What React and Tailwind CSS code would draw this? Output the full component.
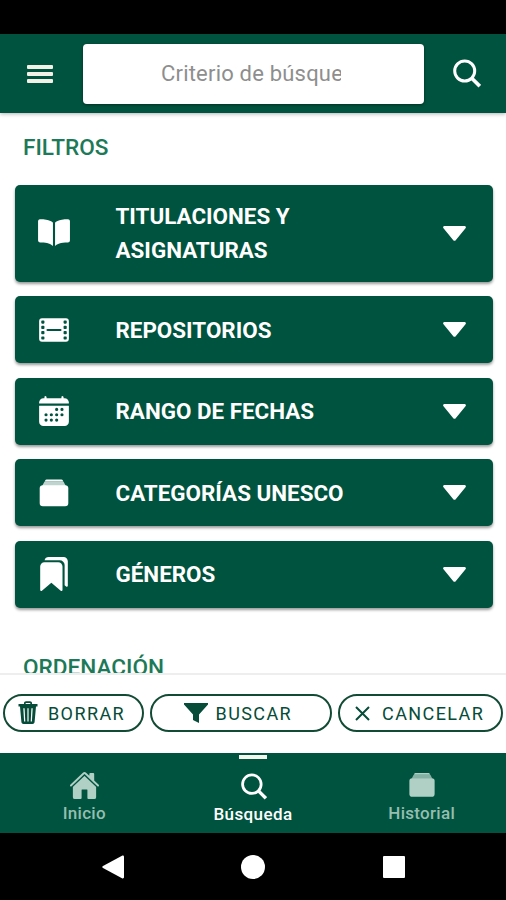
import {
  IoBook,
  IoBookmarks,
  IoCalendar,
  IoFilm,
  IoHome,
} from "react-icons/io5";

const FILTERS = [
  { label: "TITULACIONES Y ASIGNATURAS", icon: IoBook, tall: true },
  { label: "REPOSITORIOS", icon: IoFilm },
  { label: "RANGO DE FECHAS", icon: IoCalendar },
  { label: "CATEGORÍAS UNESCO", icon: StackIcon },
  { label: "GÉNEROS", icon: IoBookmarks },
];

function StackIcon({ className }) {
  return (
    <svg viewBox="0 0 34 34" fill="currentColor" className={className}>
      <path d="M9.500 3.500h15c1 0 1.500.8 1.500 2H8c0-1.200.5-2 1.500-2z" />
      <path d="M7.500 5.500h19l2.300 4.500H5.200z" opacity="0.75" />
      <rect x="2.700" y="9.300" width="28.600" height="21" rx="3.200" />
    </svg>
  );
}

function SearchIcon({ className }) {
  return (
    <svg viewBox="0 0 28 29" fill="none" stroke="currentColor" className={className}>
      <circle cx="11.700" cy="12" r="10" strokeWidth="3" />
      <path d="M18.800 19.200 26.800 27.200" strokeWidth="3.600" />
    </svg>
  );
}

function Caret() {
  return (
    <svg viewBox="0 0 23 15" fill="currentColor" className="w-[23px] h-[15px] shrink-0">
      <path d="M1.600 0h19.800c1.300 0 2 1.300 1.100 2.300l-9.800 11.900c-.6.8-1.800.8-2.400 0L.5 2.300C-.4 1.300.3 0 1.600 0z" />
    </svg>
  );
}

function TrashIcon() {
  return (
    <svg viewBox="0 0 20 24" fill="currentColor" className="w-5 h-6 shrink-0">
      <path
        fillRule="evenodd"
        d="M6 3V2.200C6 1 7 .3 8 .3h4c1 0 2 .7 2 1.900V3h5.500v2.400H18l-1.400 15.600c-.1 1.200-1 2-2.200 2H5.600c-1.200 0-2.100-.8-2.200-2L2 5.400H.5V3H6zm1.700 0h4.600V2H7.700v1zM5.300 7.300l.8 13.200h1.200L6.600 7.300H5.300zm4.100 0v13.200h1.200V7.300H9.400zm4 0-.7 13.200h1.200l.8-13.200h-1.300z"
      />
    </svg>
  );
}

function FunnelIcon() {
  return (
    <svg viewBox="0 0 24 20" fill="currentColor" className="w-6 h-5 shrink-0">
      <path d="M0 0h24v1.500L15 11.500V20l-6-3v-5.500L0 1.500z" />
    </svg>
  );
}

function CloseIcon() {
  return (
    <svg viewBox="0 0 15 15" stroke="currentColor" strokeWidth="2" className="w-[15px] h-[15px] shrink-0">
      <path d="M1 1l13 13M14 1 1 14" />
    </svg>
  );
}

function FilterRow({ label, icon: Icon, tall }) {
  return (
    <button
      type="button"
      className={`${tall ? "h-[97px]" : "h-[67px]"} flex w-full items-center rounded-[5px] bg-[#00533e] pl-[22px] pr-[27px] text-left text-white shadow-[0_2px_3px_rgba(0,0,0,0.4)]`}
    >
      <Icon className="size-[34px] shrink-0" />
      <span className="ml-[45px] w-[240px] text-[22.400px] font-bold leading-[34px]">
        {label}
      </span>
      <span className="ml-auto">
        <Caret />
      </span>
    </button>
  );
}

export default function App() {
  return (
    <div className="flex h-[900px] w-[506px] flex-col overflow-hidden bg-white font-['Roboto',sans-serif]">
      {/* Status bar */}
      <div className="h-[34px] shrink-0 bg-black" />

      {/* Header */}
      <header className="z-10 flex h-[79px] shrink-0 items-center bg-[#00533e] pl-[27px] pr-[25px] text-white shadow-[0_1px_4px_rgba(0,0,0,0.3)]">
        <button type="button" className="flex w-[26px] flex-col gap-[3px]">
          <span className="h-[4px] rounded-[1px] bg-[#f3f0e8]" />
          <span className="h-[4px] rounded-[1px] bg-[#f3f0e8]" />
          <span className="h-[4px] rounded-[1px] bg-[#f3f0e8]" />
        </button>
        <div className="ml-[30px] flex h-[60px] w-[341px] items-center rounded-[4px] bg-white pl-[78px] shadow-[0_1px_3px_rgba(0,0,0,0.45)]">
          <span className="w-[180px] overflow-hidden whitespace-nowrap text-[22px] tracking-[0.200px] text-[#8e8e8e]">
            Criterio de búsqueda
          </span>
        </div>
        <SearchIcon className="ml-auto h-[29px] w-[28px]" />
      </header>

      {/* Filters */}
      <main className="flex min-h-0 flex-1 flex-col overflow-hidden pl-[14.500px] pr-[13.500px]">
        <h2 className="mt-[18px] ml-[8.500px] h-[53.500px] shrink-0 text-[22.600px] font-medium leading-[34px] text-[#1c7a58]">
          FILTROS
        </h2>
        <div className="flex shrink-0 flex-col gap-[14.500px]">
          {FILTERS.map((f) => (
            <FilterRow key={f.label} {...f} />
          ))}
        </div>
        <h2 className="mt-[43px] ml-[8.500px] shrink-0 text-[22.600px] font-medium leading-[34px] text-[#1c7a58]">
          ORDENACIÓN
        </h2>
      </main>

      {/* Actions */}
      <div className="flex h-[80px] shrink-0 items-center gap-[6px] border-t-2 border-[#eeeeee] px-[3px] pb-[2px] text-[18px] tracking-[1.400px] text-[#064c38]">
        <button type="button" className="flex h-[38px] w-[141.500px] items-center rounded-full border-[2.500px] border-[#124b35] pl-[13px]">
          <TrashIcon />
          <span className="ml-[10px]">BORRAR</span>
        </button>
        <button type="button" className="flex h-[38px] w-[182px] items-center rounded-full border-[2.500px] border-[#124b35] pl-[32px]">
          <FunnelIcon />
          <span className="ml-[7.500px]">BUSCAR</span>
        </button>
        <button type="button" className="flex h-[38px] w-[166px] items-center rounded-full border-[2.500px] border-[#124b35] pl-[15px]">
          <CloseIcon />
          <span className="ml-[12.500px]">CANCELAR</span>
        </button>
      </div>

      {/* Tabs */}
      <nav className="grid h-[80px] shrink-0 grid-cols-3 bg-[#00533e] text-[17px] font-medium leading-[20px] text-[#94beb0]">
        <div className="flex flex-col items-center pt-[17px]">
          <IoHome className="size-[31px] text-[#b0d0c6]" />
          <span className="mt-[2px] tracking-[0.300px]">Inicio</span>
        </div>
        <div className="flex flex-col items-center pt-[2px] text-white">
          <span className="h-[4px] w-[28px] bg-[#f4f6ee]" />
          <SearchIcon className="mt-[14px] ml-[2px] h-[27px] w-[26px]" />
          <span className="mt-[4px] tracking-[0.400px]">Búsqueda</span>
        </div>
        <div className="flex flex-col items-center pt-[17px]">
          <StackIcon className="size-[30px] text-[#b0d0c6]" />
          <span className="mt-[3px] tracking-[0.300px]">Historial</span>
        </div>
      </nav>

      {/* System navigation */}
      <div className="flex h-[67px] shrink-0 items-center justify-between bg-black pl-[102px] pr-[101px] text-white">
        <svg viewBox="0 0 22 24" fill="currentColor" className="h-6 w-[22px]">
          <path d="M20 .8c1-.5 2 0 2 1v20.400c0 1-1 1.500-2 1L1 13c-1-.6-1-1.400 0-2z" />
        </svg>
        <span className="ml-[-1px] size-6 rounded-full bg-white" />
        <span className="size-[22px] rounded-[1px] bg-white" />
      </div>
    </div>
  );
}
